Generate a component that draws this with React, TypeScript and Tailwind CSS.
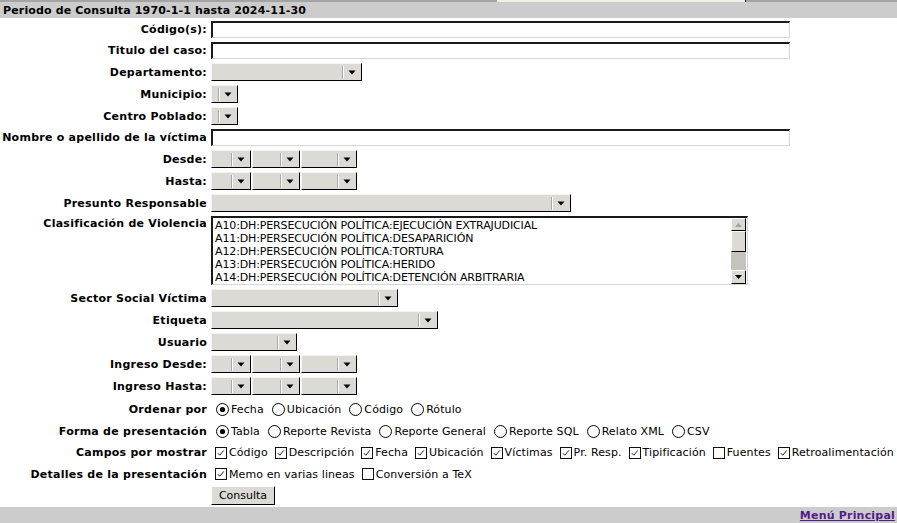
import React from "react";

const Select = ({ className }: { className: string }) => (
  <div
    className={`relative h-[18px] shrink-0 bg-[#dcdad5] border-t border-l border-b border-r border-t-[#f4f4f2] border-l-[#f4f4f2] border-b-black border-r-black ${className}`}
  >
    <span className="absolute right-[17px] top-[2px] bottom-[1px] w-[2px] border-l border-l-[#a8a8a4] bg-white" />
    <svg
      className="absolute right-[5px] top-[6px]"
      width="8"
      height="5"
      viewBox="0 0 8 5"
    >
      <path d="M0.5 0.5H7.5L4 4.5Z" fill="black" />
    </svg>
  </div>
);

const TextInput = ({ className }: { className: string }) => (
  <div
    className={`h-[17px] bg-white border-t-2 border-l-2 border-b border-r border-t-[#1a1a1a] border-l-[#1a1a1a] border-b-[#d6d6d6] border-r-[#d6d6d6] ${className}`}
  />
);

const DateSelects = () => (
  <div className="flex gap-[1px]">
    <Select className="w-[40px]" />
    <Select className="w-[48px]" />
    <Select className="w-[56px]" />
  </div>
);

const Radio = ({ on }: { on?: boolean }) => (
  <svg width="13" height="13" viewBox="0 0 13 13" className="ml-[5px] mr-[2px] shrink-0">
    <circle cx="6.5" cy="6.5" r="6" fill="white" stroke="black" strokeWidth="1" />
    {on && <circle cx="6.5" cy="6.5" r="2.6" fill="black" />}
  </svg>
);

const Check = ({ on }: { on?: boolean }) => (
  <svg width="12" height="12" viewBox="0 0 12 12" className="ml-[4px] mr-[2px] shrink-0">
    <rect x="0.5" y="0.5" width="11" height="11" fill="white" stroke="#111" strokeWidth="1" />
    {on && (
      <path d="M2.8 6.2L4.8 8.2L8.8 3.4" fill="none" stroke="#222" strokeWidth="1" />
    )}
  </svg>
);

const Row = ({
  label,
  top,
  children,
}: {
  label: string;
  top?: boolean;
  children: React.ReactNode;
}) => (
  <div className={`flex ${top ? "items-start" : "items-center"}`}>
    <div
      className={`w-[207px] shrink-0 text-right font-bold tracking-[0.25px] whitespace-nowrap leading-[13px] ${
        top ? "pt-[1px]" : ""
      }`}
    >
      {label}
    </div>
    <div className="ml-[4px] flex">{children}</div>
  </div>
);

const violencia = [
  "A10:DH:PERSECUCIÓN POLÍTICA:EJECUCIÓN EXTRAJUDICIAL",
  "A11:DH:PERSECUCIÓN POLÍTICA:DESAPARICIÓN",
  "A12:DH:PERSECUCIÓN POLÍTICA:TORTURA",
  "A13:DH:PERSECUCIÓN POLÍTICA:HERIDO",
  "A14:DH:PERSECUCIÓN POLÍTICA:DETENCIÓN ARBITRARIA",
];

const Listbox = () => (
  <div className="flex h-[69px] w-[537px] bg-white border-t-2 border-l-2 border-b border-r border-t-[#1a1a1a] border-l-[#1a1a1a] border-b-[#d6d6d6] border-r-[#d6d6d6]">
    <div className="flex-1 pl-[2px] pt-[1px] leading-[13px] tracking-[-0.13px] whitespace-nowrap overflow-hidden">
      {violencia.map((v) => (
        <div key={v}>{v}</div>
      ))}
    </div>
    <div className="w-[15px] mr-[1px] flex flex-col">
      <div className="h-[13px] flex items-center justify-center bg-[#dcdad5] border-b border-r border-b-black border-r-black border-t border-l border-t-white border-l-white">
        <svg width="7" height="4" viewBox="0 0 7 4">
          <path d="M0 4H7L3.5 0Z" fill="#a0a0a0" />
        </svg>
      </div>
      <div className="h-[21px] bg-[#dcdad5] border-b border-r border-b-black border-r-black border-t border-l border-t-white border-l-white" />
      <div className="flex-1 bg-[#c4c3bd]" />
      <div className="h-[14px] flex items-center justify-center bg-[#dcdad5] border-b border-r border-b-black border-r-black border-t border-l border-t-white border-l-white">
        <svg width="7" height="4" viewBox="0 0 7 4">
          <path d="M0 0H7L3.5 4Z" fill="black" />
        </svg>
      </div>
    </div>
  </div>
);

const Choice = ({
  label,
  gap,
  children,
}: {
  label: string;
  gap: string;
  children: React.ReactNode;
}) => (
  <div className="flex items-center">
    <div className="w-[207px] shrink-0 text-right font-bold tracking-[0.25px] whitespace-nowrap leading-[13px]">
      {label}
    </div>
    <div className={`ml-[4px] flex items-center tracking-[0.1px] whitespace-nowrap ${gap}`}>
      {children}
    </div>
  </div>
);

const Opt = ({ children }: { children: React.ReactNode }) => (
  <span className="flex items-center">{children}</span>
);

export default function App() {
  return (
    <div className="w-[897px] h-[523px] overflow-hidden bg-white text-black text-[11px] leading-[13px] font-['DejaVu_Sans',sans-serif]">
      <div className="flex h-[2px]">
        <div className="w-[497px] bg-[#a4a4a4]" />
        <div className="w-[248px] bg-[#f2f0e6]" />
        <div className="w-[1px] bg-black" />
        <div className="flex-1 bg-[#a4a4a4]" />
      </div>
      <div className="h-[16px] bg-[#cccccc] pl-[3px] flex items-center font-bold tracking-[0.15px]">
        Periodo de Consulta 1970-1-1 hasta 2024-11-30
      </div>

      <div className="mt-[3px] flex flex-col gap-[4px]">
        <Row label="Código(s):">
          <TextInput className="w-[579px]" />
        </Row>
        <Row label="Titulo del caso:">
          <TextInput className="w-[579px]" />
        </Row>
        <Row label="Departamento:">
          <Select className="w-[151px]" />
        </Row>
        <Row label="Municipio:">
          <Select className="w-[27px]" />
        </Row>
        <Row label="Centro Poblado:">
          <Select className="w-[27px]" />
        </Row>
        <Row label="Nombre o apellido de la víctima">
          <TextInput className="w-[579px]" />
        </Row>
        <Row label="Desde:">
          <DateSelects />
        </Row>
        <Row label="Hasta:">
          <DateSelects />
        </Row>
        <Row label="Presunto Responsable">
          <Select className="w-[360px]" />
        </Row>
        <Row label="Clasificación de Violencia" top>
          <Listbox />
        </Row>
        <Row label="Sector Social Víctima">
          <Select className="w-[187px]" />
        </Row>
        <Row label="Etiqueta">
          <Select className="w-[227px]" />
        </Row>
        <Row label="Usuario">
          <Select className="w-[86px]" />
        </Row>
        <Row label="Ingreso Desde:">
          <DateSelects />
        </Row>
        <Row label="Ingreso Hasta:">
          <DateSelects />
        </Row>
      </div>

      <div className="mt-[3px] flex flex-col">
        <div className="h-[22px] flex items-center">
          <Choice label="Ordenar por" gap="gap-[3px]">
            <Opt><Radio on />Fecha</Opt>
            <Opt><Radio />Ubicación</Opt>
            <Opt><Radio />Código</Opt>
            <Opt><Radio />Rótulo</Opt>
          </Choice>
        </div>
        <div className="h-[22px] flex items-center">
          <Choice label="Forma de presentación" gap="gap-[3px]">
            <Opt><Radio on />Tabla</Opt>
            <Opt><Radio />Reporte Revista</Opt>
            <Opt><Radio />Reporte General</Opt>
            <Opt><Radio />Reporte SQL</Opt>
            <Opt><Radio />Relato XML</Opt>
            <Opt><Radio />CSV</Opt>
          </Choice>
        </div>
        <div className="h-[21px] flex items-center">
          <Choice label="Campos por mostrar" gap="gap-[3px]">
            <Opt><Check on />Código</Opt>
            <Opt><Check on />Descripción</Opt>
            <Opt><Check on />Fecha</Opt>
            <Opt><Check on />Ubicación</Opt>
            <Opt><Check on />Víctimas</Opt>
            <Opt><Check on />Pr. Resp.</Opt>
            <Opt><Check on />Tipificación</Opt>
            <Opt><Check />Fuentes</Opt>
            <Opt><Check on />Retroalimentación</Opt>
          </Choice>
        </div>
        <div className="h-[22px] flex items-center">
          <Choice label="Detalles de la presentación" gap="gap-[3px]">
            <Opt><Check on />Memo en varias lineas</Opt>
            <Opt><Check />Conversión a TeX</Opt>
          </Choice>
        </div>
        <div className="pt-[1px] pb-[2px] pl-[211px]">
          <button className="h-[19px] w-[64px] bg-[#dcdad5] border-t border-l border-t-white border-l-white border-b border-r border-b-black border-r-black text-[11px] leading-[13px] font-['DejaVu_Sans',sans-serif]">
            Consulta
          </button>
        </div>
      </div>

      <div className="h-[16px] bg-[#cccccc] flex items-center justify-end pr-[2px]">
        <a href="#" className="font-bold underline text-[#551a8b] tracking-[0.2px]">
          Menú Principal
        </a>
      </div>
    </div>
  );
}
